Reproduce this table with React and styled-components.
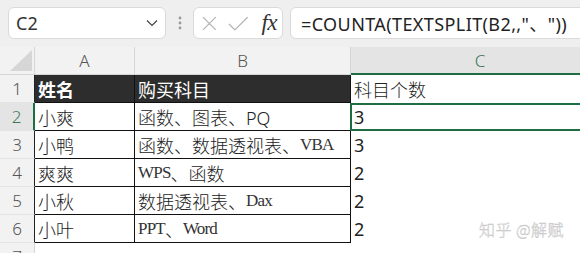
import React from 'react';
import styled, { createGlobalStyle, css } from 'styled-components';

const GREEN = '#1f6e43';

const GlobalStyle = createGlobalStyle`
  html, body {
    margin: 0;
    padding: 0;
    background: #fff;
  }
  body {
    font-family: "Noto Sans", "Noto Sans CJK SC", sans-serif;
    overflow: hidden;
  }
`;

const Sheet = styled.div`
  position: relative;
  width: 580px;
  height: 253px;
  overflow: hidden;
  background: #fff;
`;

// formula bar strip
const Toolbar = styled.div`
  display: flex;
  align-items: center;
  height: 47px;
  box-sizing: border-box;
  padding: 7px 0 8px 8px;
  background: #efefef;
`;

const Box = styled.div`
  display: flex;
  align-items: center;
  height: 32px;
  box-sizing: border-box;
  background: #fff;
  border: 1px solid #dadada;
  border-radius: 6px;
`;

const NameBox = styled(Box)`
  width: 158px;
  padding: 0 7px 0 7px;
  justify-content: space-between;
  font-size: 18px;
  color: #333;
`;

const Dots = styled.div`
  display: flex;
  justify-content: center;
  width: 27px;
`;

const IconBox = styled(Box)`
  width: 90px;
  padding: 0 5px 0 8px;
  gap: 11px;
`;

const Fx = styled.span`
  margin-left: 2px;
  font-family: "Liberation Serif", serif;
  font-style: italic;
  font-size: 23px;
  color: #333;
  letter-spacing: -0.5px;
`;

const FormulaBox = styled(Box)`
  flex: 1;
  margin-left: 7px;
  margin-right: -12px;
  padding-left: 10px;
  font-size: 18px;
  letter-spacing: 0.4px;
  color: #222;
  white-space: nowrap;
`;

const Grid = styled.div`
  display: grid;
  width: 610px;
  grid-template-columns: 35px 100px 216px 1fr;
  grid-auto-rows: 28px;
`;

const Corner = styled.div`
  background: #f2f2f2;
  border-right: 1px solid #d6d6d6;
  border-bottom: 1px solid #d6d6d6;
  box-sizing: border-box;
  display: flex;
  align-items: flex-end;
  justify-content: flex-end;
  padding: 0 2px 3px 0;
`;

const ColHead = styled.div`
  display: flex;
  align-items: center;
  justify-content: center;
  box-sizing: border-box;
  background: #f2f2f2;
  border-right: 1px solid #d6d6d6;
  border-bottom: 1px solid #d6d6d6;
  font-size: 17px;
  font-weight: 300;
  color: #555;
  ${(p) =>
    p.$active &&
    css`
      background: #e4e4e4;
      color: #3d7556;
      border-bottom: 2px solid ${GREEN};
    `}
`;

const RowHead = styled.div`
  display: flex;
  align-items: center;
  justify-content: center;
  box-sizing: border-box;
  background: #f2f2f2;
  border-right: 1px solid ${(p) => (p.$inTable ? '#222' : '#d6d6d6')};
  border-bottom: 1px solid #e3e3e3;
  font-size: 17px;
  font-weight: 300;
  color: #555;
  ${(p) =>
    p.$active &&
    css`
      background: #e4e4e4;
      color: #3d7556;
      border-right: 2px solid ${GREEN};
    `}
`;

const Cell = styled.div`
  display: flex;
  align-items: center;
  box-sizing: border-box;
  padding-left: 3px;
  font-size: 18px;
  font-weight: 300;
  color: #222;
  white-space: nowrap;
  overflow: hidden;
  ${(p) =>
    p.$table &&
    css`
      border-right: 1px solid #111;
      border-bottom: 1px solid #111;
    `}
  ${(p) =>
    p.$dark &&
    css`
      background: #2d2d2d;
      color: #fff;
      font-weight: ${p.$bold ? 700 : 400};
    `}
  ${(p) =>
    p.$song &&
    css`
      font-family: "Noto Sans CJK SC", sans-serif;
      font-weight: 300;
    `}
  ${(p) =>
    p.$active &&
    css`
      box-shadow: inset 0 0 0 2px ${GREEN};
      margin-left: -1px;
      padding-left: 4px;
    `}
`;

// SimSun-like latin runs: thin serif
const Latin = styled.span`
  font-family: "Liberation Serif", serif;
  font-size: 17px;
  letter-spacing: -0.8px;
  font-weight: 400;
  color: #333;
`;

const Num = styled.span`
  font-family: "Noto Sans", sans-serif;
  font-weight: 400;
  color: #222;
`;

const Watermark = styled.div`
  position: absolute;
  right: 16px;
  bottom: 12px;
  font-family: "Noto Sans CJK SC", sans-serif;
  font-size: 16px;
  font-weight: 300;
  color: #f0f0f0;
  -webkit-text-stroke: 0.4px #c4c4c4;
  letter-spacing: 0.5px;
`;

const Chevron = () => (
  <svg width="12" height="8" viewBox="0 0 12 8">
    <path d="M1 1.5 L6 6.5 L11 1.5" fill="none" stroke="#444" strokeWidth="1.2" />
  </svg>
);

const VDots = () => (
  <svg width="4" height="14" viewBox="0 0 4 14">
    <circle cx="2" cy="2" r="1.4" fill="#9a9a9a" />
    <circle cx="2" cy="7" r="1.4" fill="#9a9a9a" />
    <circle cx="2" cy="12" r="1.4" fill="#9a9a9a" />
  </svg>
);

const Cross = () => (
  <svg width="15" height="15" viewBox="0 0 15 15">
    <path d="M1 1 L14 14 M14 1 L1 14" stroke="#b4b4b4" strokeWidth="1.3" fill="none" />
  </svg>
);

const Check = () => (
  <svg width="21" height="15" viewBox="0 0 21 15">
    <path d="M1 8 L7 14 L20 1" stroke="#b4b4b4" strokeWidth="1.3" fill="none" />
  </svg>
);

const CornerMark = () => (
  <svg width="22" height="21" viewBox="0 0 22 21">
    <path d="M22 0 L22 21 L0 21 Z" fill="#d6d6d6" />
  </svg>
);

// b: list of [text, isLatin] runs
const rows = [
  { n: 1, a: '姓名', b: [['购买科目']], c: '科目个数', header: true },
  { n: 2, a: '小爽', b: [['函数、图表、PQ']], c: '3', active: true },
  { n: 3, a: '小鸭', b: [['函数、数据透视表、'], ['VBA', true]], c: '3', song: true },
  { n: 4, a: '爽爽', b: [['WPS', true], ['、函数']], c: '2', song: true },
  { n: 5, a: '小秋', b: [['数据透视表、'], ['Dax', true]], c: '2', song: true },
  { n: 6, a: '小叶', b: [['PPT', true], ['、'], ['Word', true]], c: '2', song: true },
];

export default function App() {
  return (
    <Sheet>
      <GlobalStyle />
      <Toolbar>
        <NameBox>
          <span>C2</span>
          <Chevron />
        </NameBox>
        <Dots>
          <VDots />
        </Dots>
        <IconBox>
          <Cross />
          <Check />
          <Fx>fx</Fx>
        </IconBox>
        <FormulaBox>=COUNTA(TEXTSPLIT(B2,,"、"))</FormulaBox>
      </Toolbar>

      <Grid>
        <Corner>
          <CornerMark />
        </Corner>
        <ColHead>A</ColHead>
        <ColHead>B</ColHead>
        <ColHead $active>C</ColHead>

        {rows.map((r) => (
          <React.Fragment key={r.n}>
            <RowHead $active={r.active} $inTable>
              {r.n}
            </RowHead>
            <Cell $table $dark={r.header} $bold={r.header}>
              {r.a}
            </Cell>
            <Cell $table $dark={r.header} $song={r.song}>
              {r.b.map(([text, latin], i) =>
                latin ? <Latin key={i}>{text}</Latin> : <span key={i}>{text}</span>
              )}
            </Cell>
            <Cell $active={r.active}>
              {r.header ? r.c : <Num>{r.c}</Num>}
            </Cell>
          </React.Fragment>
        ))}

        <RowHead>7</RowHead>
        <Cell />
        <Cell />
        <Cell />
      </Grid>

      <Watermark>知乎 @解赋</Watermark>
    </Sheet>
  );
}
